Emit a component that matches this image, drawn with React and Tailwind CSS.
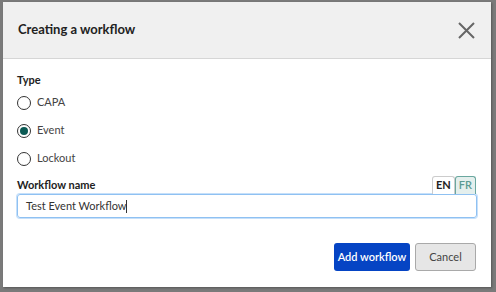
export default function App() {
  return (
    <div
      className="w-[496px] h-[292px] bg-[#7a7a7a] overflow-hidden pt-[2px] pl-[3px]"
      style={{ fontFamily: 'Lato, "Open Sans", sans-serif' }}
    >
      <div className="w-[488px] h-[285px] bg-white flex flex-col shadow-[1px_1px_2px_rgba(0,0,0,0.3)]">
        <div className="h-[57px] bg-[#f0f0f0] border-b border-[#d6d6d6] flex items-center justify-between pl-[15px] pr-[16px]">
          <h2 className="text-[13px] font-bold text-[#222]">Creating a workflow</h2>
          <svg width="17" height="17" viewBox="0 0 17 17" className="text-[#666]">
            <path d="M1 1 L16 16 M16 1 L1 16" stroke="currentColor" strokeWidth="2" />
          </svg>
        </div>

        <div className="flex-1 px-[14px] pt-[13px]">
          <div className="text-[11px] font-bold text-[#222] leading-[16px]">Type</div>
          <div className="flex flex-col gap-[11px] mt-[6px]">
            {["CAPA", "Event", "Lockout"].map((t) => (
              <label key={t} className="flex items-center gap-[6px] h-[17px] text-[11px] text-[#444]">
                <span className="w-[14px] h-[14px] rounded-full border-[1.5px] border-[#333] flex items-center justify-center">
                  {t === "Event" && <span className="w-[8px] h-[8px] rounded-full bg-[#0b5a54]" />}
                </span>
                {t}
              </label>
            ))}
          </div>

          <div className="mt-[9px] flex items-end justify-between">
            <div className="text-[11px] font-bold text-[#222] leading-[16px] pb-[1px]">Workflow name</div>
            <div className="flex mr-[1px]">
              <span className="px-[3px] h-[18px] flex items-center text-[11px] font-bold text-[#222] border border-b-0 border-[#ccc] rounded-t-[3px] bg-white">EN</span>
              <span className="px-[3px] h-[18px] flex items-center text-[11px] font-semibold text-[#5a9a92] border border-b-0 border-[#6aa79f] rounded-t-[3px] bg-[#e4efed]">FR</span>
            </div>
          </div>
          <div className="h-[24px] border border-[#8fc1f2] rounded-[3px] shadow-[0_0_0_1px_#c6e0fa] flex items-center pl-[8px] text-[11px] text-[#333]">
            Test Event Workflow
            <span className="w-px h-[13px] bg-[#333]" />
          </div>

          <div className="flex justify-end gap-[5px] mt-[25px] pr-[1px]">
            <button className="w-[76px] h-[28px] bg-[#0544c4] text-white text-[11px] font-semibold rounded-[3px] whitespace-nowrap">Add workflow</button>
            <button className="w-[61px] h-[28px] bg-[#e6e6e6] border border-[#a9a9a9] text-[#444] text-[11px] rounded-[3px]">Cancel</button>
          </div>
        </div>
      </div>
    </div>
  );
}
